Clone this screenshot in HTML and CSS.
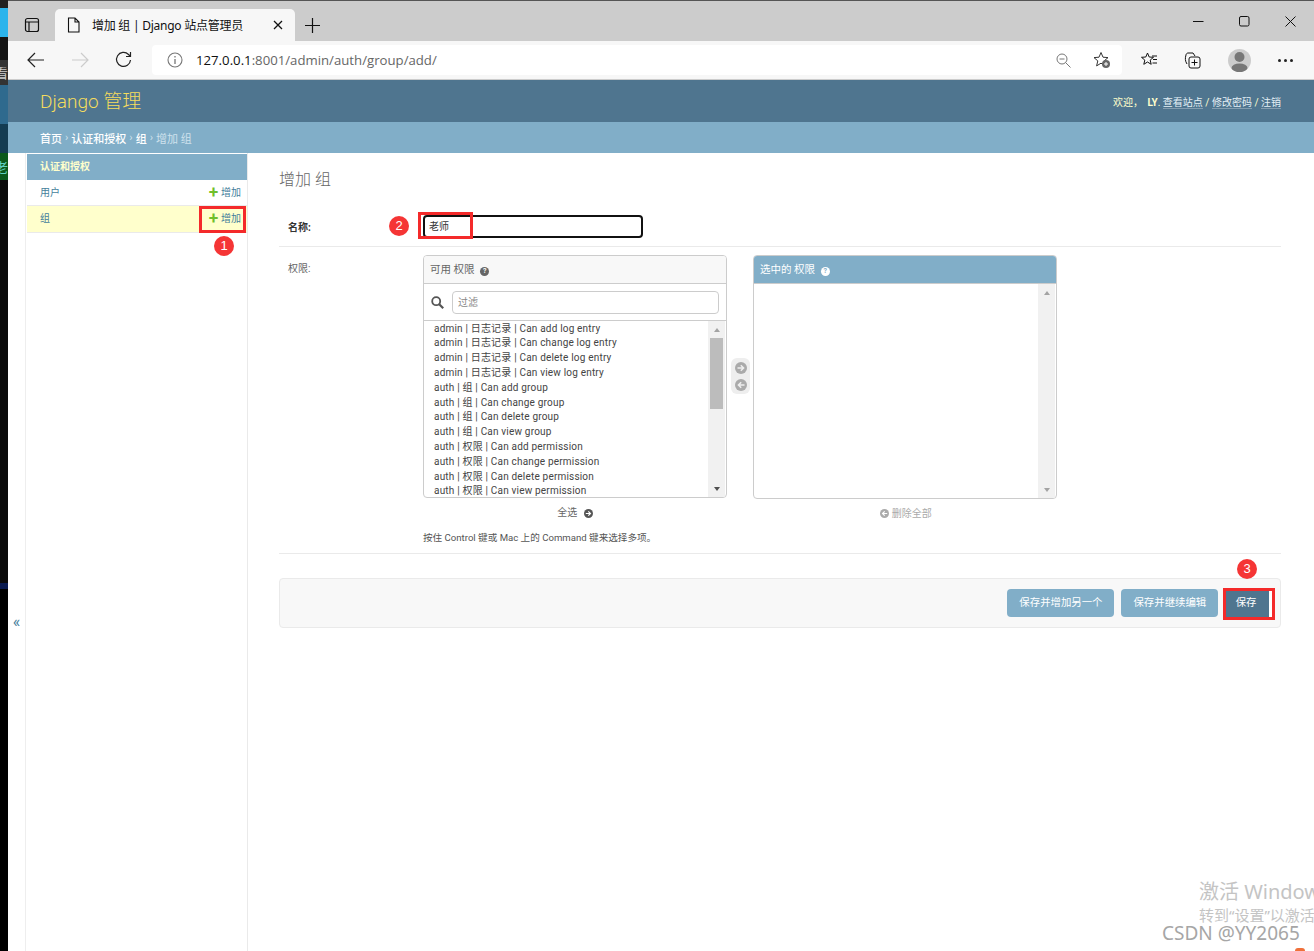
FILE: index.html
```html
<!DOCTYPE html>
<html lang="zh-CN">
<head>
<meta charset="utf-8">
<title>增加 组 | Django 站点管理员</title>
<link rel="stylesheet" href="styles.css">
</head>
<body>
<div class="desktop">
  <div class="d d1"></div><div class="d d2"></div><div class="d d3"></div><div class="d d4"><span>看</span></div><div class="d d5"></div><div class="d d6"></div><div class="d d7"><span>老</span></div><div class="d d8"></div>
</div>
<div class="window">
  <div class="tabbar">
    <svg class="tabs-icon" width="16" height="16" viewBox="0 0 16 16"><rect x="1.5" y="1.5" width="13" height="13" rx="2" fill="none" stroke="#111" stroke-width="1.2"/><path d="M1.5 5h13M5 5v9.5" fill="none" stroke="#111" stroke-width="1.2"/></svg>
    <div class="tab">
      <svg width="13" height="16" viewBox="0 0 13 16"><path d="M1.5 1h6.5l4 4v10h-10.500z M8 1v4h4" fill="none" stroke="#111" stroke-width="1.100"/></svg>
      <span class="tab-title">增加 组 | Django 站点管理员</span>
      <svg class="tab-x" width="10" height="10" viewBox="0 0 10 10"><path d="M1 1l8 8M9 1l-8 8" stroke="#111" stroke-width="1.300"/></svg>
    </div>
    <svg class="plus" width="15" height="15" viewBox="0 0 15 15"><path d="M7.500 0v15M0 7.500h15" stroke="#111" stroke-width="1.200"/></svg>
    <div class="winctl">
      <svg width="11" height="11" viewBox="0 0 11 11"><path d="M0 5.500h10.500" stroke="#111" stroke-width="1"/></svg>
      <svg width="11" height="11" viewBox="0 0 11 11"><rect x=".5" y=".5" width="9.500" height="9.500" rx="1.500" fill="none" stroke="#111"/></svg>
      <svg width="11" height="11" viewBox="0 0 11 11"><path d="M.5.500l10 10M10.500.500l-10 10" stroke="#111"/></svg>
    </div>
  </div>
  <div class="toolbar">
    <svg class="t-back" width="18" height="16" viewBox="0 0 18 16"><path d="M17 8H1M8 1L1 8l7 7" fill="none" stroke="#222" stroke-width="1.200"/></svg>
    <svg class="t-fwd" width="18" height="16" viewBox="0 0 18 16"><path d="M1 8h16M10 1l7 7-7 7" fill="none" stroke="#ccc" stroke-width="1.200"/></svg>
    <svg class="t-reload" width="18" height="18" viewBox="0 0 18 18"><path d="M15.500 9A7 7 0 1 1 13.500 3.500L15.500 5.500M15.500 1v4.500H11" fill="none" stroke="#222" stroke-width="1.200"/></svg>
    <div class="address">
      <svg width="16" height="16" viewBox="0 0 16 16"><circle cx="8" cy="8" r="7" fill="none" stroke="#777" stroke-width="1.100"/><path d="M8 7v5M8 4v1.500" stroke="#777" stroke-width="1.300"/></svg>
      <span class="url"><b>127.0.0.1</b>:8001/admin/auth/group/add/</span>
      <svg class="zoom-ic" width="15" height="15" viewBox="0 0 15 15"><circle cx="6" cy="6" r="5" fill="none" stroke="#777"/><path d="M9.500 9.500l5 5M3.500 6h5" stroke="#777"/></svg>
      <svg class="fav-add" width="18" height="18" viewBox="0 0 18 18"><path d="M8 1.500l2 4.700 5 .4-3.800 3.300 1.200 5-4.400-2.700-4.400 2.700 1.200-5L1 6.600l5-.4z" fill="none" stroke="#333"/><circle cx="13" cy="13" r="4" fill="#666"/><path d="M13 11v4M11 13h4" stroke="#fff"/></svg>
    </div>
    <svg class="t-favs" width="17" height="16" viewBox="0 0 17 16"><path d="M6.500 1l1.700 4 4.300.3-3.300 2.800 1 4.200-3.700-2.300-3.700 2.300 1-4.200L.5 5.300l4.300-.3z" fill="none" stroke="#111"/><path d="M11 4h5M12 7.500h4M11.500 11h4.500" stroke="#111"/></svg>
    <svg class="t-coll" width="17" height="17" viewBox="0 0 17 17"><path d="M3 12c-2-3-2-6-1-9 0-1 1-2 2-2h5l2 3" fill="none" stroke="#111"/><rect x="5" y="5" width="11" height="11" rx="2" fill="none" stroke="#111"/><path d="M10.500 7.500v6M7.500 10.500h6" stroke="#111"/></svg>
    <div class="avatar"><svg width="23" height="23" viewBox="0 0 23 23"><circle cx="11.500" cy="8" r="5" fill="#777"/><ellipse cx="11.500" cy="19" rx="8" ry="4.500" fill="#777"/></svg></div>
    <span class="more"><i></i><i></i><i></i></span>
  </div>

  <header class="site-header">
    <div class="brand">Django 管理</div>
    <div class="tools">欢迎， <strong>LY</strong>. <a>查看站点</a> / <a>修改密码</a> / <a>注销</a></div>
  </header>
  <div class="crumbs"><a>首页</a> <s>›</s> <a>认证和授权</a> <s>›</s> <a>组</a> <s>›</s> 增加 组</div>

  <div class="main">
    <div class="toggle">«</div>
    <aside class="sidebar">
      <div class="module">
        <div class="caption">认证和授权</div>
        <div class="row"><span>用户</span><span class="add"><em>✚</em> 增加</span></div>
        <div class="row current"><span>组</span><span class="add"><em>✚</em> 增加</span></div>
      </div>
    </aside>
    <main class="content">
      <h1>增加 组</h1>
      <div class="form-row name-row">
        <label class="req">名称:</label>
        <div class="fake-input">老师</div>
      </div>
      <div class="form-row perm-row">
        <label>权限:</label>
        <div class="perm-field">
          <div class="selector">
            <div class="sel-col">
              <div class="box">
                <div class="box-title">可用 权限 <span class="help">?</span></div>
                <div class="filter">
                  <svg width="13" height="13" viewBox="0 0 13 13"><circle cx="5.200" cy="5.200" r="4" fill="none" stroke="#555" stroke-width="1.800"/><path d="M8.200 8.200l4 4" stroke="#555" stroke-width="2.200"/></svg>
                  <div class="filter-input">过滤</div>
                </div>
                <div class="list">
                  <div class="opts">
                    <div>admin | 日志记录 | Can add log entry</div>
                    <div>admin | 日志记录 | Can change log entry</div>
                    <div>admin | 日志记录 | Can delete log entry</div>
                    <div>admin | 日志记录 | Can view log entry</div>
                    <div>auth | 组 | Can add group</div>
                    <div>auth | 组 | Can change group</div>
                    <div>auth | 组 | Can delete group</div>
                    <div>auth | 组 | Can view group</div>
                    <div>auth | 权限 | Can add permission</div>
                    <div>auth | 权限 | Can change permission</div>
                    <div>auth | 权限 | Can delete permission</div>
                    <div>auth | 权限 | Can view permission</div>
                  </div>
                  <div class="scroll"><i class="up"></i><b class="thumb"></b><i class="down"></i></div>
                </div>
              </div>
              <div class="choose-all">全选 <svg class="dot" width="9" height="9" viewBox="0 0 10 10"><circle cx="5" cy="5" r="5" fill="#555"/><path d="M2 5h5M4.800 2.600L7.200 5 4.800 7.400" fill="none" stroke="#fff" stroke-width="1.300"/></svg></div>
            </div>
            <div class="chooser">
              <svg width="12" height="12" viewBox="0 0 12 12"><circle cx="6" cy="6" r="6" fill="#aaa"/><path d="M2.500 6h6M5.800 3.200L8.600 6 5.800 8.800" fill="none" stroke="#eee" stroke-width="1.500"/></svg>
              <svg width="12" height="12" viewBox="0 0 12 12"><circle cx="6" cy="6" r="6" fill="#aaa"/><path d="M9.500 6h-6M6.200 3.200L3.400 6l2.800 2.800" fill="none" stroke="#eee" stroke-width="1.500"/></svg>
            </div>
            <div class="sel-col">
              <div class="box chosen">
                <div class="box-title">选中的 权限 <span class="help">?</span></div>
                <div class="list">
                  <div class="opts"></div>
                  <div class="scroll"><i class="up"></i><i class="down"></i></div>
                </div>
              </div>
              <div class="clear-all"><svg class="dot" width="9" height="9" viewBox="0 0 10 10"><circle cx="5" cy="5" r="5" fill="#aaa"/><path d="M8 5H3M5.200 2.600L2.800 5l2.400 2.400" fill="none" stroke="#fff" stroke-width="1.300"/></svg> 删除全部</div>
            </div>
          </div>
          <p class="hint">按住 Control 键或 Mac 上的 Command 键来选择多项。</p>
        </div>
      </div>
      <div class="submit-row">
        <span class="btn">保存并增加另一个</span>
        <span class="btn">保存并继续编辑</span>
        <span class="btn primary">保存</span>
      </div>
    </main>
  </div>
</div>

<div class="mark m1"></div><div class="mark m2"></div><div class="mark m3"></div>
<div class="num n1">1</div><div class="num n2">2</div><div class="num n3">3</div>
<div class="wm wm1">激活 Windows</div>
<div class="wm wm2">转到“设置”以激活</div>
<div class="wm wm3">CSDN @YY2065</div>
<div class="corner"></div>
</body>
</html>
```
FILE: styles.css
```css
* { box-sizing: border-box; }
html, body { margin: 0; height: 951px; overflow: hidden; }
body { position: relative; display: flex; background: #fff; font-family: Roboto, "Noto Sans CJK SC", sans-serif; font-size: 10px; color: #333; }

.desktop { width: 8px; height: 951px; display: flex; flex-direction: column; flex: none; background: #0c0c0c; }
.d { flex: none; display: flex; justify-content: flex-end; align-items: center; overflow: hidden; font-size: 13px; }
.d span { flex: none; }
.d1 { height: 8px; background: #222; }
.d2 { height: 29px; background: #2bb4ec; }
.d3 { height: 23px; background: #141414; }
.d4 { height: 25px; background: #333; color: #ccc; }
.d5 { height: 39px; background: #2f6a8e; }
.d6 { height: 29px; background: #143c52; }
.d7 { height: 27px; background: #0b5a1c; color: #5fd0c0; }
.d8 { height: 771px; background: linear-gradient(to bottom, #0a0a0a 403px, #0a1a50 403px, #0a1a50 409px, #000 409px); }

.window { flex: 1; min-width: 0; display: flex; flex-direction: column; height: 951px; }

.tabbar { height: 41px; border-top: 1px solid #555; background: #cccccc; display: flex; align-items: flex-start; }
.tabs-icon { margin: 16px 0 0 16px; }
.tab { margin: 8px 0 0 15px; width: 240px; height: 32px; background: #f7f7f7; border-radius: 5px 5px 0 0; display: flex; align-items: center; padding: 0 12px; }
.tab-title { margin-left: 12px; font-size: 12px; letter-spacing: -.25px; color: #111; font-family: "Noto Sans", "Noto Sans CJK SC", sans-serif; white-space: nowrap; }
.tab-x { margin-left: auto; }
.plus { margin: 17px 0 0 10px; }
.winctl { margin-left: auto; display: flex; gap: 35px; padding: 15px 18px 0 0; }

.toolbar { height: 39px; background: #f7f7f7; border-bottom: 1px solid #ccc; display: flex; align-items: center; position: relative; }
.t-back { margin-left: 19px; }
.t-fwd { margin-left: 26px; }
.t-reload { margin-left: 26px; }
.address { margin-left: 19px; width: 970px; height: 30px; background: #fff; border-radius: 4px; display: flex; align-items: center; padding: 0 15px; }
.url { margin-left: 13px; font-size: 13.200px; color: #666; font-family: "Open Sans", sans-serif; }
.url b { font-weight: 400; color: #111; }
.zoom-ic { margin-left: auto; }
.fav-add { margin-left: 22px; margin-right: -4px; }
.t-favs { margin-left: 19px; }
.t-coll { margin-left: 26px; }
.avatar { margin-left: 27px; width: 23px; height: 23px; border-radius: 50%; background: #ccc; overflow: hidden; }
.more { margin-left: 27px; display: flex; gap: 3px; }
.more i { width: 3px; height: 3px; background: #222; border-radius: 50%; }

.site-header { height: 42px; padding: 0 33px 0 32px; background: #4f758f; display: flex; align-items: center; justify-content: space-between; }
.brand { font-size: 19px; line-height: 24px; margin-top: 1px; color: #f5dd5d; font-weight: 300; }
.tools { font-size: 10px; color: #ffc; }
.tools strong { font-weight: 700; margin-left: 2px; }
.tools a { color: #e4f0f6; border-bottom: 1px solid rgba(255,255,255,.3); }

.crumbs { height: 31px; background: #81aec8; color: #cfe2ed; padding-left: 32px; display: flex; align-items: center; gap: 3px; font-size: 11px; }
.crumbs a { color: #fff; font-weight: 500; }
.crumbs s { text-decoration: none; }

.main { flex: 1; min-height: 0; display: flex; }
.toggle { width: 18px; flex: none; color: #447e9b; font-size: 16px; text-align: center; padding-top: 459px; border-right: 1px solid #eee; line-height: 20px; }
.sidebar { width: 222px; flex: none; padding: 1px 0 0 1px; border-right: 1px solid #eaeaea; }
.module { width: 220px; }
.caption { height: 26px; background: #81aec8; color: #ffc; font-weight: 700; font-size: 10px; line-height: 26px; padding-left: 13px; }
.row { height: 26px; display: flex; justify-content: space-between; align-items: center; padding: 0 6px 3px 13px; color: #447e9b; border-bottom: 1px solid #eaeaea; font-size: 10px; }
.row.current { background: #ffc; height: 27px; }
.add em { color: #70bf2b; font-style: normal; font-size: 10px; }

.content { flex: 1; min-width: 0; padding: 0 33px 0 31px; }
h1 { margin: 17px 0 0; font-size: 16px; line-height: 20px; font-weight: 300; color: #666; }
.form-row { display: flex; border-bottom: 1px solid #eaeaea; }
label { width: 144px; flex: none; padding-left: 9px; font-size: 10px; color: #666; }
.req { font-weight: 700; color: #333; }
.name-row { margin-top: 25px; height: 32px; align-items: flex-start; }
.name-row label { padding-top: 4px; }
.fake-input { width: 220px; height: 23px; border: 2px solid #111; border-radius: 4px; padding-left: 4px; line-height: 19px; font-size: 10px; color: #333; }
.perm-row { height: 307px; padding-top: 8px; }
.perm-row label { padding-top: 5px; }
.perm-field { flex: 1; }
.selector { display: flex; }
.sel-col { width: 304px; }
.box { height: 243px; border: 1px solid #ccc; border-radius: 4px; overflow: hidden; display: flex; flex-direction: column; }
.box-title { height: 28px; background: #f8f8f8; border-bottom: 1px solid #ccc; padding-left: 6px; line-height: 28px; font-size: 10.500px; color: #666; flex: none; }
.chosen { height: 244px; }
.chosen .box-title { background: #81aec8; color: #fff; border-bottom: 1px solid #ccc; }
.help { display: inline-block; width: 9px; height: 9px; border-radius: 50%; background: #666; color: #fff; font-size: 7px; line-height: 9px; text-align: center; font-weight: 700; margin-left: 3px; vertical-align: 0; }
.chosen .help { background: #fff; color: #81aec8; }
.filter { height: 37px; flex: none; border-bottom: 1px solid #ccc; display: flex; align-items: center; padding: 0 7px; gap: 8px; }
.filter-input { flex: 1; height: 23px; border: 1px solid #ccc; border-radius: 4px; line-height: 21px; padding-left: 5px; color: #888; }
.list { flex: 1; min-height: 0; display: flex; }
.opts { flex: 1; padding: .6px 0 0 10px; overflow: hidden; font-size: 10px; line-height: 14.800px; color: #444; letter-spacing: .19px; }
.scroll { width: 17px; flex: none; background: #f1f1f1; display: flex; flex-direction: column; align-items: center; margin-right: 1px; position: relative; }
.scroll .up { margin-top: 7px; border: 3.500px solid transparent; border-top: 0; border-bottom: 4px solid #a3a3a3; }
.scroll .down { margin-top: auto; margin-bottom: 6px; border: 3.500px solid transparent; border-bottom: 0; border-top: 4px solid #505050; }
.chosen .scroll .down { border-top-color: #a3a3a3; }
.thumb { margin-top: 6px; width: 13px; height: 71px; background: #bcbcbc; display: block; }
.choose-all { text-align: center; margin-top: 8px; line-height: 14px; color: #666; }
.clear-all { text-align: center; margin-top: 8px; line-height: 14px; color: #aaa; padding-left: 2px; }
.dot { vertical-align: -2px; margin-left: 4px; }
.clear-all .dot { margin: 0; vertical-align: -1px; }
.chooser { width: 19px; height: 36px; margin: 103px 3px 0 4px; background: #eee; border-radius: 6px; display: flex; flex-direction: column; align-items: center; justify-content: space-around; padding: 1px 0; flex: none; }
.hint { margin: 10px 0 0; font-size: 9.600px; line-height: 14px; color: #555; }

.submit-row { margin-top: 24px; height: 50px; background: #f8f8f8; border: 1px solid #eaeaea; border-radius: 4px; display: flex; justify-content: flex-end; align-items: flex-start; padding: 10px 11px 0 0; gap: 7px; }
.btn { height: 28px; padding: 0 12px; line-height: 28px; background: #81aec8; color: #fff; border-radius: 4px; font-size: 10.400px; }
.btn.primary { background: #4f758f; padding: 0 12.500px; margin-left: -2px; border-radius: 0; box-shadow: 3px 0 0 #fff; }

.mark { position: absolute; border: 3px solid #f42a2a; z-index: 4; }
.m1 { left: 199px; top: 206px; width: 47px; height: 27px; }
.m2 { left: 418px; top: 212px; width: 55px; height: 27px; }
.m3 { left: 1223px; top: 588px; width: 52px; height: 32px; }
.num { position: absolute; width: 20px; height: 20px; border-radius: 50%; background: #f53535; color: #fff; font-size: 13px; line-height: 20px; text-align: center; z-index: 5; font-family: "Liberation Sans", sans-serif; }
.n1 { left: 214px; top: 236px; }
.n2 { left: 389px; top: 216px; }
.n3 { left: 1237px; top: 559px; }
.wm { position: absolute; white-space: nowrap; z-index: 3; font-family: "Noto Sans", "Noto Sans CJK SC", sans-serif; color: #c4c4c4; }
.wm1 { left: 1199px; top: 878px; font-size: 20px; line-height: 28px; }
.wm2 { left: 1199px; top: 907px; font-size: 15px; line-height: 17px; }
.wm3 { left: 1162px; top: 923px; font-size: 19px; line-height: 20px; color: #a6a6a6; }
.corner { position: absolute; left: 1295px; top: 948px; width: 10px; height: 3px; background: #f0703a; border-radius: 5px 5px 0 0; }
```
